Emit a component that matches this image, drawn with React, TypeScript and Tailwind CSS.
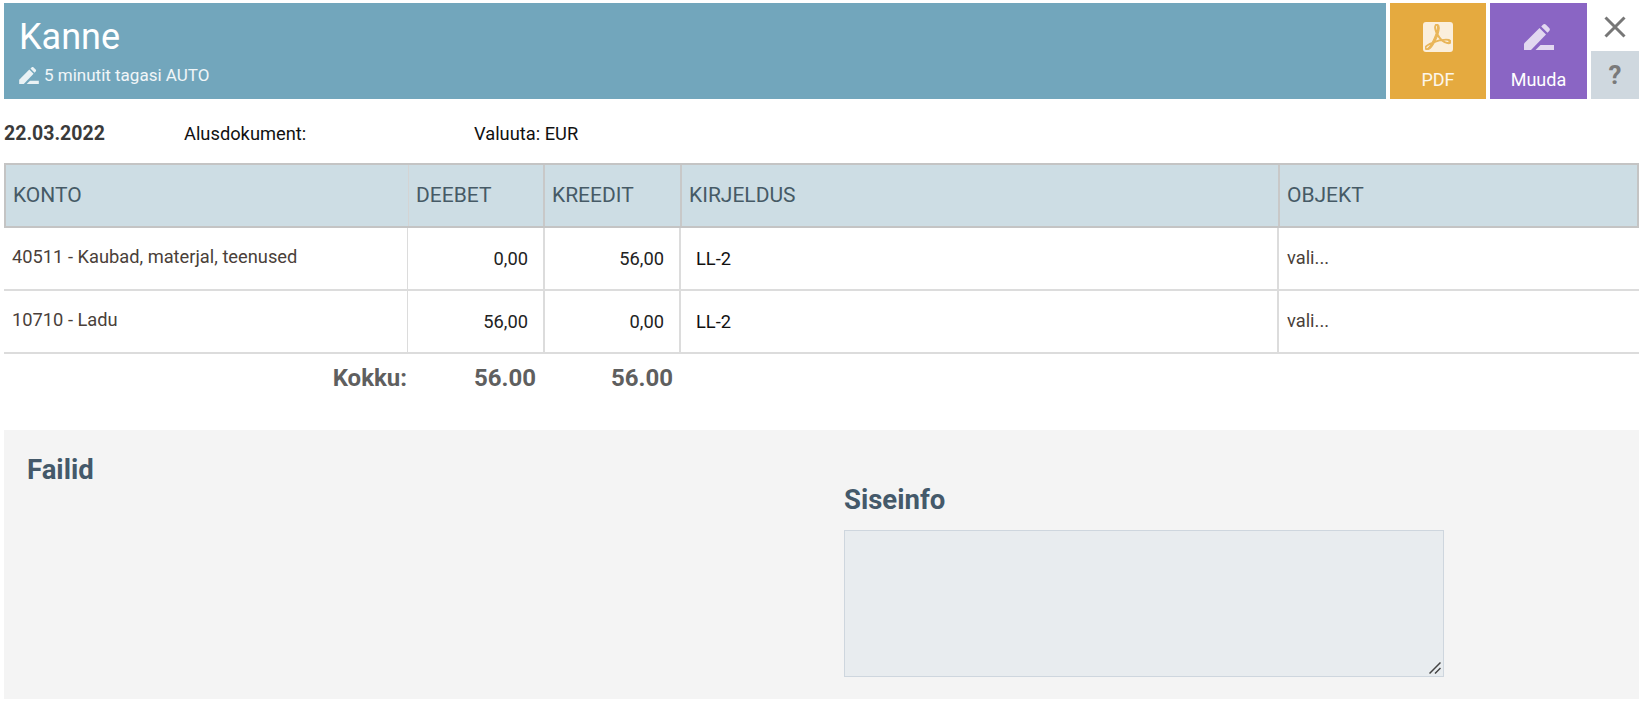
import React from 'react';
import { SiAdobeacrobatreader } from 'react-icons/si';

const columns = [
  { title: 'KONTO', className: 'w-[403px] border-r border-[#d4d4d4]' },
  { title: 'DEEBET', className: 'w-[136px] border-r-[2px] border-[#c8c8c8]' },
  { title: 'KREEDIT', className: 'w-[137px] border-r-[2px] border-[#c8c8c8]' },
  { title: 'KIRJELDUS', className: 'w-[598px] border-r-[2px] border-[#c8c8c8]' },
  { title: 'OBJEKT', className: 'flex-1' },
];

const rows = [
  { account: '40511 - Kaubad, materjal, teenused', debit: '0,00', credit: '56,00', description: 'LL-2' },
  { account: '10710 - Ladu', debit: '56,00', credit: '0,00', description: 'LL-2' },
];

const PencilIcon = ({ className }: { className?: string }) => (
  <svg viewBox="0 0 30 26" className={className} fill="currentColor">
    <path d="M0 26v-6.5L15.5 4l6.5 6.5L7 26z" />
    <path d="M17.2 2.4l1.7-1.7c.9-.9 2.2-.9 3.1 0l3.2 3.2c.9.9.9 2.2 0 3.1l-1.7 1.7z" />
    <path d="M11.5 26l5-5H30v5z" />
  </svg>
);

const App: React.FC = () => {
  return (
    <div className="h-[705px] overflow-hidden bg-white pl-1 pr-[6px] pt-[3px] font-['Roboto',sans-serif]">
      {/* Header */}
      <div className="flex h-24 gap-1">
        <div className="w-[1382px] bg-[#72a6bc] pl-[15px] pt-[13px] text-white">
          <h1 className="text-[36px] leading-[42px]">Kanne</h1>
          <div className="mt-[7px] flex items-center gap-[5px] text-[17px] leading-5 text-white/90">
            <PencilIcon className="h-[17px] w-[20px] text-white/85" />
            <span>5 minutit tagasi AUTO</span>
          </div>
        </div>
        <button className="flex w-24 flex-col items-center bg-[#e5aa3f] pt-[19px] text-white">
          <span className="flex h-[30px] w-[30px] items-center justify-center rounded-[3px] bg-[#fbefdc]">
            <SiAdobeacrobatreader className="h-[26px] w-[26px] stroke-[1] text-[#e9b65a]" />
          </span>
          <span className="mt-[18px] text-[18px] leading-5 text-white/90">PDF</span>
        </button>
        <button className="flex w-[97px] flex-col items-center bg-[#8a65c4] pt-[21px] text-white">
          <PencilIcon className="h-[26px] w-[30px] text-white/75" />
          <span className="mt-[20px] text-[18px] leading-5">Muuda</span>
        </button>
        <div className="flex w-12 flex-col">
          <div className="flex h-12 items-center justify-center">
            <svg viewBox="0 0 24 24" className="h-[24px] w-[24px] text-[#777]" stroke="currentColor" strokeWidth="3" fill="none">
              <path d="M2.5 2.5l19 19M21.5 2.5l-19 19" />
            </svg>
          </div>
          <div className="flex h-12 items-center justify-center bg-[#cfd8df] text-[26px] font-bold text-[#7a7a7a]">?</div>
        </div>
      </div>

      {/* Info */}
      <div className="flex h-[64px] items-center pt-[6px] text-[18.3px] leading-5 text-[#111]">
        <span className="w-[180px] text-[19.5px] font-bold text-[#3a3a3a]">22.03.2022</span>
        <span className="w-[290px]">Alusdokument:</span>
        <span>Valuuta: EUR</span>
      </div>

      {/* Table */}
      <div className="flex h-[65px] border-[2px] border-[#c4c4c4] bg-[#cddde4] text-[21px] text-[#465a66]">
        {columns.map((col) => (
          <div key={col.title} className={`flex items-center pl-[7px] ${col.className}`}>
            {col.title}
          </div>
        ))}
      </div>
      {rows.map((row) => (
        <div key={row.account} className="flex h-[63px] border-b-[2px] border-[#dcdcdc] text-[18.3px]">
          <div className="flex w-[404px] items-center border-r border-[#dcdcdc] pb-[4px] pl-2 text-[#4a3f3a]">{row.account}</div>
          <div className="flex w-[137px] items-center justify-end border-r-[2px] border-[#dcdcdc] pr-[15px] text-[#222]">{row.debit}</div>
          <div className="flex w-[136px] items-center justify-end border-r-[2px] border-[#dcdcdc] pr-[15px] text-[#222]">{row.credit}</div>
          <div className="flex w-[598px] items-center border-r-[2px] border-[#dcdcdc] pl-[15px] text-[#111]">{row.description}</div>
          <div className="flex flex-1 items-center pb-[2px] pl-2 text-[#4a3f3a]">vali...</div>
        </div>
      ))}

      {/* Totals */}
      <div className="flex h-[50px] items-center pb-[2px] text-[24px] font-bold text-[#5f5f5f]">
        <div className="w-[403px] text-right">Kokku:</div>
        <div className="w-[129px] text-right">56.00</div>
        <div className="w-[137px] text-right">56.00</div>
      </div>

      {/* Bottom */}
      <div className="mt-[26px] flex h-[269px] bg-[#f4f4f4]">
        <div className="w-[840px] pl-[23px] pt-[24px]">
          <h2 className="text-[27.5px] font-bold leading-8 text-[#44596a]">Failid</h2>
        </div>
        <div className="pt-[54px]">
          <h2 className="text-[27.5px] font-bold leading-8 text-[#44596a]">Siseinfo</h2>
          <div className="relative mt-[14px] h-[147px] w-[600px]">
            <textarea className="block h-full w-full resize-none border border-[#ced6de] bg-[#e8ecef]" />
            <svg viewBox="0 0 12 12" className="absolute bottom-[3px] right-[3px] h-3 w-3 text-[#444]" stroke="currentColor" strokeWidth="1.5" fill="none">
              <path d="M0.5 11.5L11.5 0.5M6 11.5l5.5-5.5" />
            </svg>
          </div>
        </div>
      </div>
    </div>
  );
};

export default App;
